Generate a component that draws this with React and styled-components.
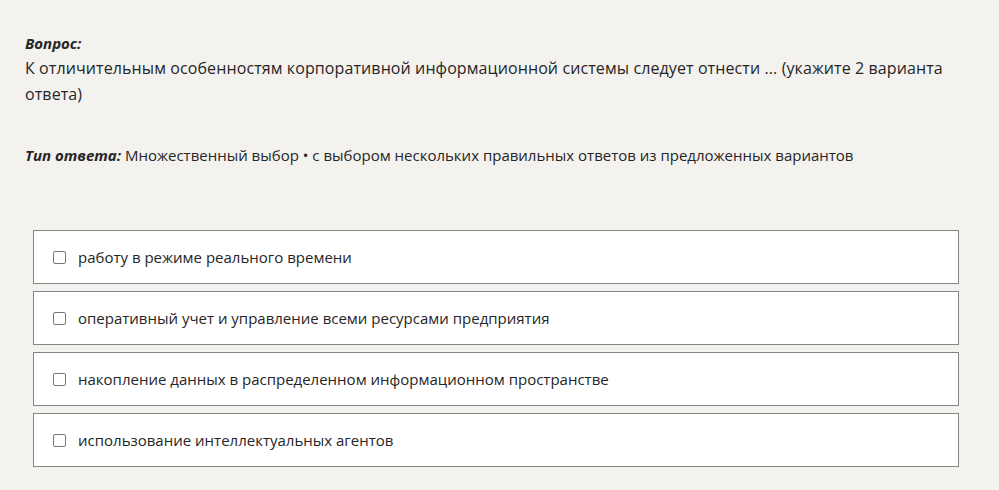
import React from 'react';
import styled, { createGlobalStyle } from 'styled-components';

const GlobalStyle = createGlobalStyle`
  html, body {
    margin: 0;
    padding: 0;
    background: #f3f2ef;
  }
  body {
    font-family: 'Open Sans', 'Noto Sans', sans-serif;
    color: #262626;
  }
`;

const Page = styled.div`
  padding: 31px 40px 20px 25px;
`;

const Label = styled.div`
  font-size: 15px;
  font-weight: 700;
  font-style: italic;
  line-height: 24px;
`;

const Question = styled.div`
  font-size: 16px;
  letter-spacing: 0.1px;
  line-height: 26px;
  margin-bottom: 35px;
`;

const TypeLine = styled.div`
  font-size: 15px;
  line-height: 26px;

  b {
    font-weight: 700;
    font-style: italic;
  }
`;

const Options = styled.div`
  display: flex;
  flex-direction: column;
  gap: 7px;
  margin: 62px 0 0 8px;
`;

const Option = styled.label`
  display: flex;
  align-items: center;
  gap: 12px;
  height: 52px;
  padding: 0 19px;
  background: #fff;
  border: 1px solid #858585;
  font-size: 15px;
  cursor: pointer;
`;

const Box = styled.span`
  width: 11px;
  height: 11px;
  border: 1px solid #767676;
  border-radius: 2px;
  flex-shrink: 0;
`;

const answers = [
  'работу в режиме реального времени',
  'оперативный учет и управление всеми ресурсами предприятия',
  'накопление данных в распределенном информационном пространстве',
  'использование интеллектуальных агентов',
];

export default function App() {
  return (
    <Page>
      <GlobalStyle />
      <Label>Вопрос:</Label>
      <Question>
        К отличительным особенностям корпоративной информационной системы следует отнести ... (укажите 2 варианта ответа)
      </Question>
      <TypeLine>
        <b>Тип ответа:</b> Множественный выбор • с выбором нескольких правильных ответов из предложенных вариантов
      </TypeLine>
      <Options>
        {answers.map((a) => (
          <Option key={a}>
            <Box />
            {a}
          </Option>
        ))}
      </Options>
    </Page>
  );
}
